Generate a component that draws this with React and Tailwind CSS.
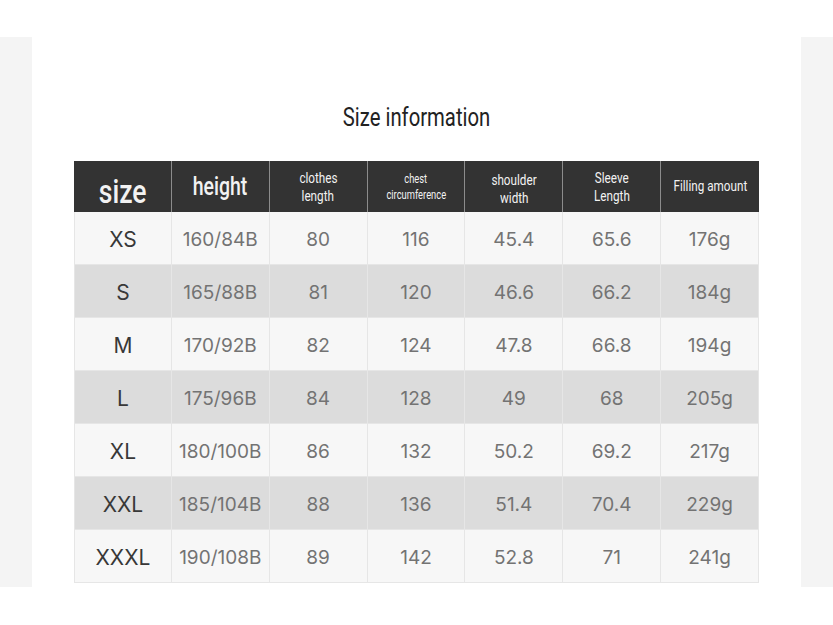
const cond = "font-['Roboto',sans-serif]";
const body = "font-['Inter','Roboto',sans-serif]";

const rows = [
  ['XS', '160/84B', '80', '116', '45.4', '65.6', '176g'],
  ['S', '165/88B', '81', '120', '46.6', '66.2', '184g'],
  ['M', '170/92B', '82', '124', '47.8', '66.8', '194g'],
  ['L', '175/96B', '84', '128', '49', '68', '205g'],
  ['XL', '180/100B', '86', '132', '50.2', '69.2', '217g'],
  ['XXL', '185/104B', '88', '136', '51.4', '70.4', '229g'],
  ['XXXL', '190/108B', '89', '142', '52.8', '71', '241g'],
];

// narrow look: roboto squeezed sideways
const Narrow = ({ children, className = '' }) => (
  <span className={`inline-block whitespace-nowrap scale-x-[0.78] ${cond} ${className}`}>{children}</span>
);

const HeadCell = ({ children, className = '', last }) => (
  <div
    className={`flex flex-col items-center justify-center text-center text-[#f2f2f2] ${
      last ? '' : 'border-r border-[#8c8c8c]'
    } ${className}`}
  >
    {children}
  </div>
);

export default function App() {
  return (
    <div className="w-[833px] h-[625px] bg-white overflow-hidden">
      <div className="flex pt-[37px]">
        <div className="w-8 h-[550px] bg-[#f4f4f4]" />

        <div className="flex-1 h-[550px] bg-white px-[42px]">
          <h1 className="text-center text-[#222] mt-[63px] h-[61px] leading-[34px]">
            <Narrow className="text-[26px] scale-x-[0.77]">Size information</Narrow>
          </h1>

          <div className="w-[685px]">
            <div className="grid grid-cols-7 h-[51px] bg-[#333333]">
              <HeadCell className="pt-2">
                <Narrow className="text-[34px] font-medium leading-none">size</Narrow>
              </HeadCell>
              <HeadCell>
                <Narrow className="text-[25px] font-medium leading-none">height</Narrow>
              </HeadCell>
              <HeadCell className="leading-[18px]">
                <Narrow className="text-[15px]">clothes</Narrow>
                <Narrow className="text-[15px]">length</Narrow>
              </HeadCell>
              <HeadCell className="leading-[16px]">
                <Narrow className="text-[12px]">chest</Narrow>
                <Narrow className="text-[12px]">circumference</Narrow>
              </HeadCell>
              <HeadCell className="leading-[18px] pt-1">
                <Narrow className="text-[15px]">shoulder</Narrow>
                <Narrow className="text-[15px]">width</Narrow>
              </HeadCell>
              <HeadCell className="leading-[18px]">
                <Narrow className="text-[15px]">Sleeve</Narrow>
                <Narrow className="text-[15px]">Length</Narrow>
              </HeadCell>
              <HeadCell last>
                <Narrow className="text-[15px]">Filling amount</Narrow>
              </HeadCell>
            </div>

            {rows.map((r, i) => (
              <div
                key={r[0]}
                className={`grid grid-cols-7 h-[53px] border-b border-[#e6e6e6] ${
                  i % 2 ? 'bg-[#dcdcdc]' : 'bg-[#f7f7f7]'
                } ${body}`}
              >
                {r.map((v, j) => (
                  <div
                    key={j}
                    className={`flex items-center justify-center pt-1 border-r border-[#e6e6e6] first:border-l ${
                      j === 0 ? 'text-[21px] text-[#383838]' : 'text-[19px] text-[#737373]'
                    }`}
                  >
                    {v}
                  </div>
                ))}
              </div>
            ))}
          </div>
        </div>

        <div className="w-8 h-[550px] bg-[#f4f4f4]" />
      </div>
    </div>
  );
}
